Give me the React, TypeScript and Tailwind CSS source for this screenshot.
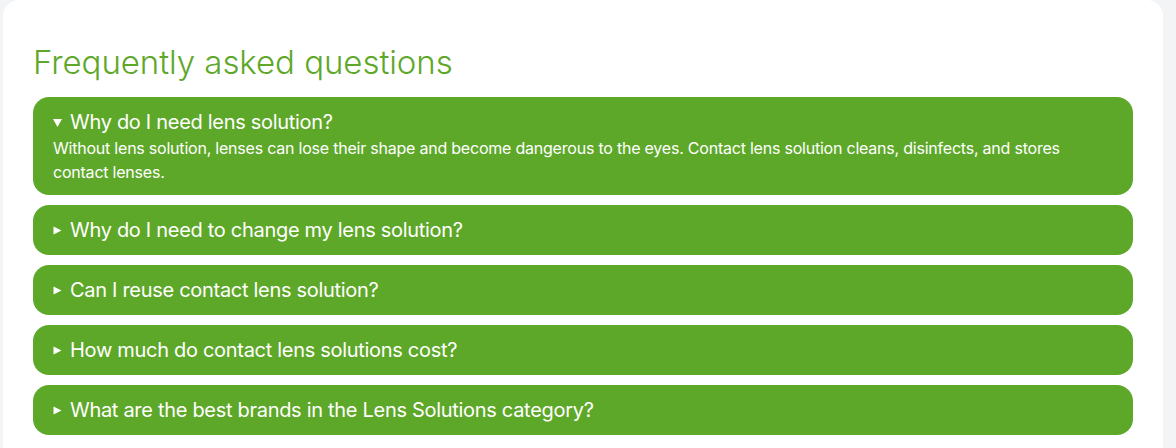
import { useState } from 'react';

const faqs = [
  {
    q: 'Why do I need lens solution?',
    a: 'Without lens solution, lenses can lose their shape and become dangerous to the eyes. Contact lens solution cleans, disinfects, and stores contact lenses.',
  },
  {
    q: 'Why do I need to change my lens solution?',
    a: 'Old solution loses its ability to disinfect. Always use fresh solution every time you store your lenses.',
  },
  {
    q: 'Can I reuse contact lens solution?',
    a: 'No. Reusing solution can let bacteria grow in your lens case.',
  },
  {
    q: 'How much do contact lens solutions cost?',
    a: 'Prices vary by brand and bottle size.',
  },
  {
    q: 'What are the best brands in the Lens Solutions category?',
    a: 'Popular brands include Bausch + Lomb, Alcon and CooperVision.',
  },
];

function Arrow({ open }: { open: boolean }) {
  return (
    <svg width="9" height="9" viewBox="0 0 9 9" className="shrink-0 fill-white">
      {open ? <path d="M0 1h9L4.5 9z" /> : <path d="M0.5 0.5v8l8-4z" />}
    </svg>
  );
}

export default function App() {
  const [openIndex, setOpenIndex] = useState<number | null>(0);

  return (
    <div className="h-[448px] overflow-hidden bg-[#f2f4f6] pl-[3px] pr-[13px]" style={{ fontFamily: 'Inter, "Noto Sans", sans-serif' }}>
      <div className="min-h-[470px] rounded-2xl bg-white px-[30px] pb-[13px] pt-[41px]">
        <h2 className="mb-[14px] text-[33px] font-light leading-[42px] tracking-[-0.05px] text-[#5ea829]">
          Frequently asked questions
        </h2>
        <div className="flex flex-col gap-[10px]">
          {faqs.map((item, i) => {
            const open = openIndex === i;
            return (
              <div key={item.q} className={`rounded-2xl bg-[#5ea829] px-5 text-white ${open ? 'pb-[11px] pt-[12px]' : 'py-[12px]'}`}>
                <button
                  type="button"
                  onClick={() => setOpenIndex(open ? null : i)}
                  className="flex w-full items-center gap-2 text-left text-[20px] leading-[26px] tracking-[-0.3px]"
                >
                  <Arrow open={open} />
                  <span>{item.q}</span>
                </button>
                {open && (
                  <p className="mt-[1px] text-[16px] leading-[24px] tracking-[-0.22px]">{item.a}</p>
                )}
              </div>
            );
          })}
        </div>
      </div>
    </div>
  );
}
